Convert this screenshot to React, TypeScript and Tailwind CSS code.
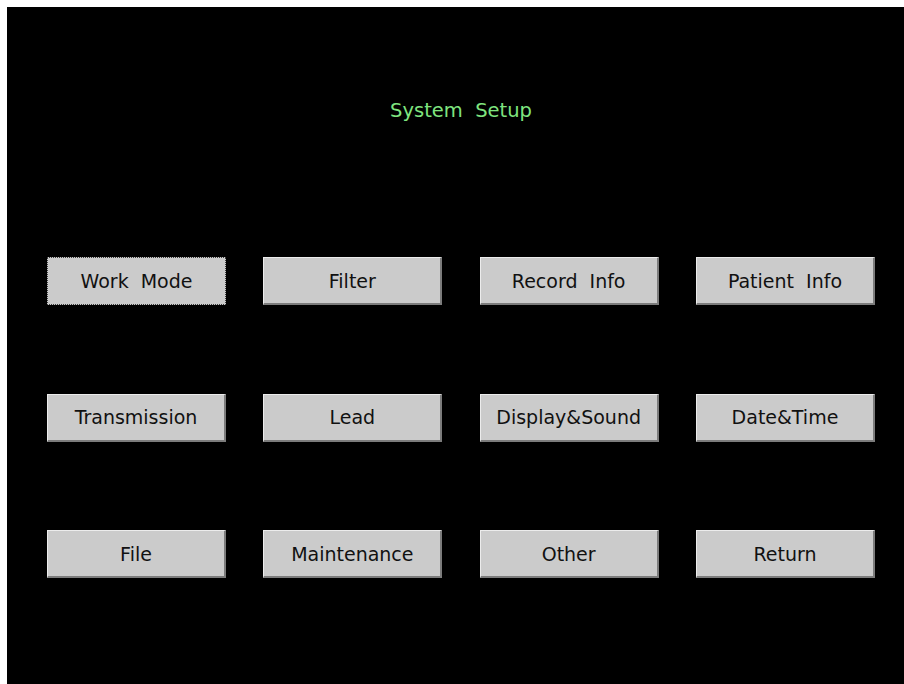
import React from 'react';

const rows = [
  ['Work  Mode', 'Filter', 'Record  Info', 'Patient  Info'],
  ['Transmission', 'Lead', 'Display&Sound', 'Date&Time'],
  ['File', 'Maintenance', 'Other', 'Return'],
];

const SetupButton: React.FC<{ label: string; focused?: boolean }> = ({ label, focused }) => (
  <button
    className={`h-[48px] w-[179px] bg-[#cbcbcb] text-[19px] text-[#111] whitespace-pre ${
      focused
        ? 'border border-dotted border-[#3a3a3a]'
        : 'border-t border-l border-r-2 border-b-2 border-t-[#ececec] border-l-[#ececec] border-r-[#7c7c7c] border-b-[#7c7c7c]'
    }`}
  >
    {label}
  </button>
);

export default function App() {
  return (
    <div className="min-h-[684px] w-[904px] bg-white pl-[7px] pt-[7px]" style={{ fontFamily: '"DejaVu Sans", Verdana, sans-serif' }}>
      <div className="flex h-[677px] w-[897px] flex-col bg-black">
        {/* Title */}
        <div className="mt-[89px] pl-[11px] text-center text-[19.5px] text-[#7fe47f] whitespace-pre">System  Setup</div>

        {/* Menu grid */}
        <div className="ml-[40px] mt-[132px] grid grid-cols-[repeat(4,179px)] gap-x-[37.33px] gap-y-[88.5px]">
          {rows.flat().map((label, i) => (
            <SetupButton key={label} label={label} focused={i === 0} />
          ))}
        </div>
      </div>
    </div>
  );
}
